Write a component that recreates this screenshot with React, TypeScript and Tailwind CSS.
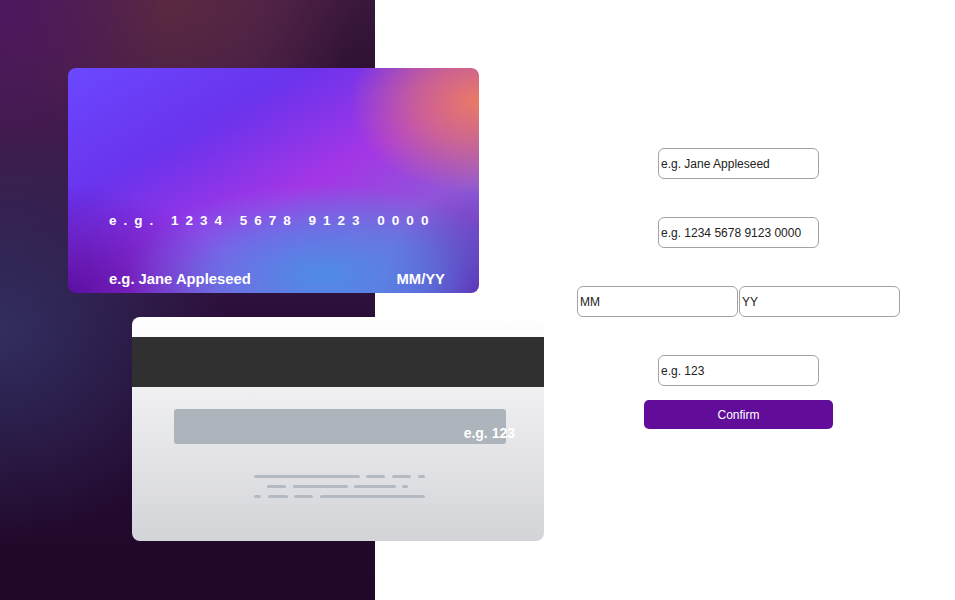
const lines: [number, number][][] = [
  [[0, 106], [112, 19], [138, 19], [164, 7]],
  [[13, 19], [39, 55], [100, 42], [148, 6]],
  [[0, 7], [14, 20], [40, 19], [66, 105]],
]

const Field = ({ placeholder, className = "" }: { placeholder: string; className?: string }) => (
  <input
    placeholder={placeholder}
    className={`h-[31px] w-[161px] rounded-[6px] border border-[#a3a3a3] bg-white px-[2px] text-[12px] text-black placeholder:text-[#222] outline-none ${className}`}
  />
)

const App = () => {
  return (
    <main className="flex h-[600px] w-[955px] overflow-hidden bg-white font-['Liberation_Sans',Arial,sans-serif]">
      {/* Left side with cards */}
      <section className="relative z-10 h-full w-[375px] shrink-0 bg-[radial-gradient(ellipse_60%_35%_at_0%_55%,rgba(50,50,100,0.9),transparent),radial-gradient(ellipse_45%_30%_at_0%_0%,rgba(78,22,98,0.9),transparent),radial-gradient(ellipse_50%_25%_at_45%_0%,rgba(92,42,62,0.9),transparent),radial-gradient(ellipse_35%_30%_at_100%_15%,rgba(40,14,44,0.9),transparent),linear-gradient(180deg,#4a1f4c_0%,#3a1a48_30%,#260c35_60%,#200829_100%)] pl-[68px] pt-[68px]">
        {/* Front */}
        <div className="flex h-[225px] w-[411px] flex-col justify-end rounded-[8px] bg-[radial-gradient(ellipse_42%_55%_at_100%_15%,#ea7a63_0%,rgba(234,122,99,0.6)_35%,transparent_75%),radial-gradient(ellipse_60%_50%_at_62%_92%,#4f8be8_0%,rgba(79,139,232,0.55)_45%,transparent_80%),radial-gradient(ellipse_50%_60%_at_0%_100%,#5a0fa0_0%,transparent_80%),radial-gradient(ellipse_30%_60%_at_100%_100%,#6516a8_0%,transparent_80%),linear-gradient(150deg,#6a48ff_0%,#6a33ec_30%,#a336e6_55%,#8f56d8_75%,#6a6fd8_100%)] px-[41px] pb-[3px] text-white">
          <p className="mb-[37px] whitespace-nowrap text-[13.5px] font-bold tracking-[7px]">e.g. 1234 5678 9123 0000</p>
          <div className="flex items-center justify-between">
            <span className="text-[14.8px] font-bold">e.g. Jane Appleseed</span>
            <span className="mr-[-7px] text-[14.8px] font-bold">MM/YY</span>
          </div>
        </div>

        {/* Back */}
        <div className="ml-[64px] mt-[24px] h-[224px] w-[412px] overflow-hidden rounded-[8px] bg-[linear-gradient(180deg,#ffffff_0%,#f1f1f3_30%,#d3d4d8_100%)]">
          <div className="mt-[20px] h-[50px] bg-[#303030]"></div>
          <div className="relative ml-[42px] mt-[22px] h-[35px] w-[332px] rounded-[3px] bg-[#adb4bc]">
            <span className="absolute right-[-9px] top-[14px] text-[14px] font-bold text-white">e.g. 123</span>
          </div>
          <div className="ml-[122px] mt-[31px] flex flex-col gap-[7px]">
            {lines.map((row, i) => (
              <div key={i} className="relative h-[3px] w-[172px]">
                {row.map(([x, w], j) => (
                  <span key={j} className="absolute top-0 h-[3px] rounded-full bg-[#b4bac2]" style={{ left: x, width: w }}></span>
                ))}
              </div>
            ))}
          </div>
        </div>
      </section>

      {/* Form */}
      <section className="ml-[202px] flex w-[323px] flex-col items-center pt-[148px]">
        <Field placeholder="e.g. Jane Appleseed" />
        <Field placeholder="e.g. 1234 5678 9123 0000" className="mt-[38px]" />
        <div className="mt-[38px] flex w-[323px] gap-px">
          <Field placeholder="MM" />
          <Field placeholder="YY" />
        </div>
        <Field placeholder="e.g. 123" className="mt-[38px]" />
        <button className="mt-[14px] h-[29px] w-[189px] rounded-[5px] bg-[#620d9a] text-[12px] text-white">Confirm</button>
      </section>
    </main>
  )
}

export default App
